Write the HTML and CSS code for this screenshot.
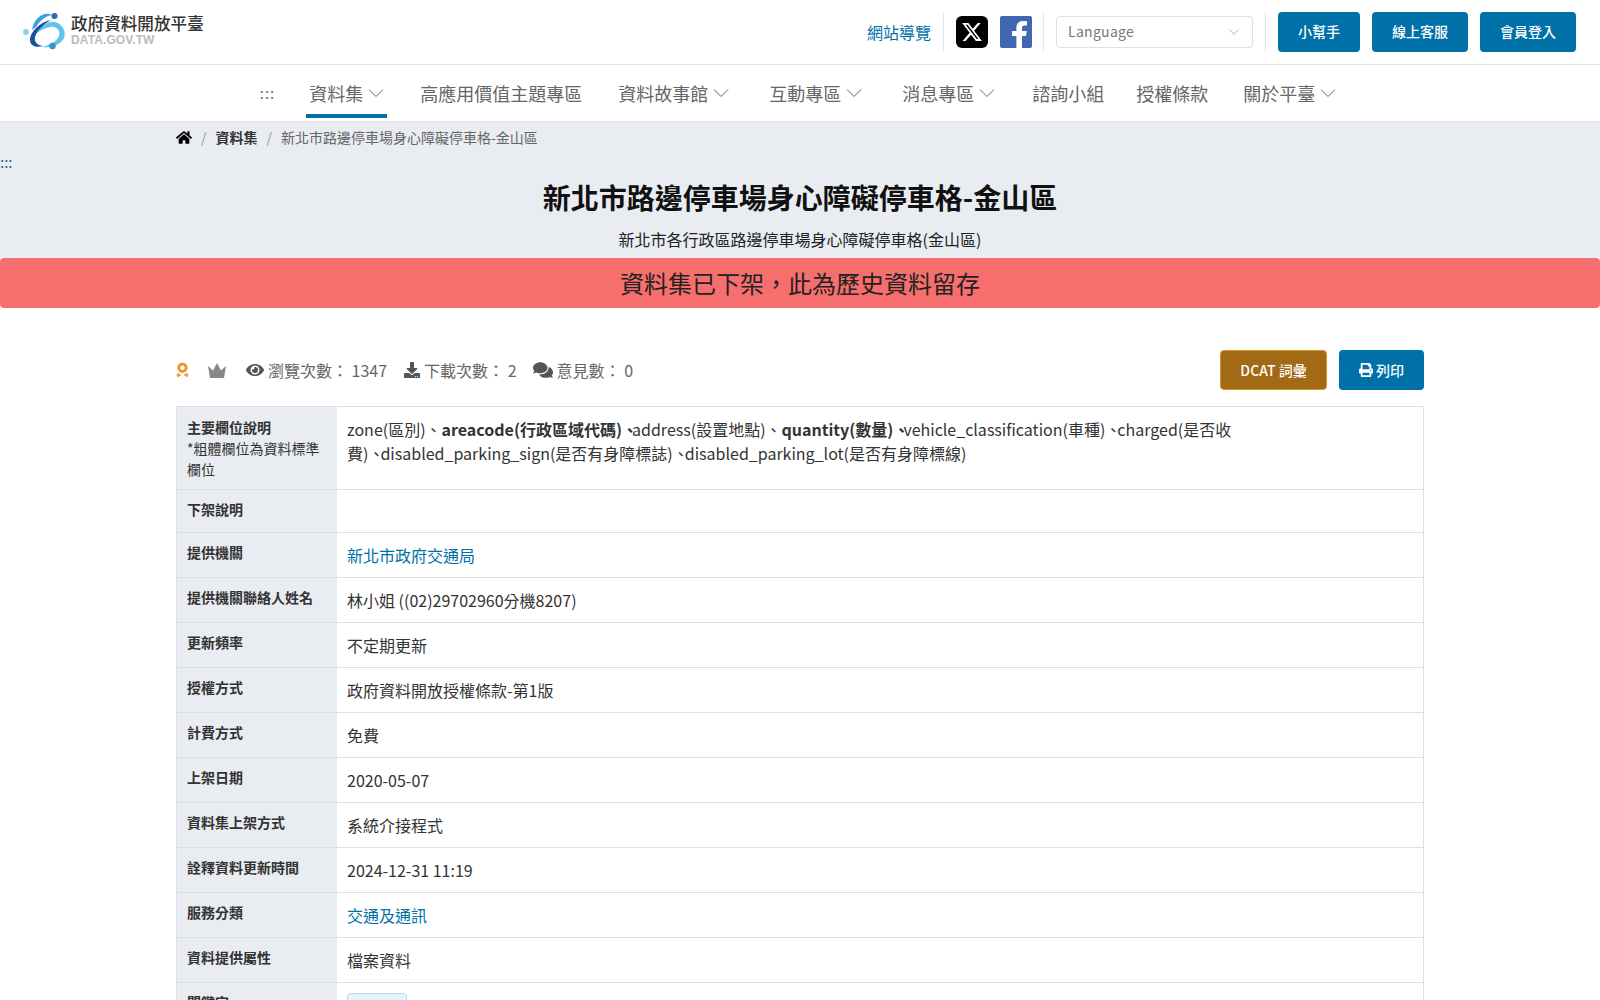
FILE: index.html
```html
<!DOCTYPE html>
<html lang="zh-Hant">
<head>
    <meta charset="utf-8">
    <title>新北市路邊停車場身心障礙停車格-金山區</title>
    <link rel="stylesheet" href="styles.css">
</head>
<body>
    <header class="top-bar">
        <a class="logo" href="#">
            <svg class="logo-mark" viewBox="0 0 50 44">
                <path d="M17 23C20 15 30 9 38 13 45 17 47 26 42 31 36 37 29 38 22 37 30 35 37 31 39 26 41 20 36 16 30 17 25 18 21 20 17 23z" fill="#62c4ea"/>
                <path d="M12 20C14 8 24 1 32 5 25 6 20 11 16 17z" fill="#3a9fde"/>
                <path d="M31 10C20 12 10 22 10 30 10 36 16 38 23 36 17 35 14 32 15 27 17 20 24 14 31 10z" fill="#1b4fa0"/>
                <circle cx="34.500" cy="6" r="3" fill="#2f68b5"/>
                <circle cx="6" cy="22" r="3" fill="#8ad4ee"/>
                <circle cx="32.500" cy="36" r="3.200" fill="#3a8fd0"/>
            </svg>
            <span class="logo-text">
                <span class="logo-name">政府資料開放平臺</span>
                <span class="logo-en">DATA.GOV.TW</span>
            </span>
        </a>
        <div class="top-tools">
            <a class="sitemap" href="#">網站導覽</a>
            <span class="divider"></span>
            <a class="social social-x" href="#">
                <svg viewBox="0 0 24 24"><path fill="#fff" d="M18.244 2.25h3.308l-7.227 8.26 8.502 11.24H16.17l-5.214-6.817L4.99 21.75H1.68l7.73-8.835L1.254 2.25H8.08l4.713 6.231zm-1.161 17.52h1.833L7.084 4.126H5.117z"/></svg>
            </a>
            <a class="social social-fb" href="#">
                <svg viewBox="0 0 32 32"><path fill="#fff" d="M22 32V20h4l.8-5H22v-3c0-1.500.7-2.600 2.800-2.600H27V5.200C26 5.100 24.500 5 23 5c-4 0-6.600 2.400-6.600 6.700V15H12v5h4.400v12z"/></svg>
            </a>
            <span class="divider"></span>
            <div class="lang-select">
                <span>Language</span>
                <svg class="chevron" viewBox="0 0 16 16"><path d="M2 5l6 6 6-6" fill="none" stroke="#aab" stroke-width="1.200"/></svg>
            </div>
            <span class="divider"></span>
            <a class="btn" href="#">小幫手</a>
            <a class="btn" href="#">線上客服</a>
            <a class="btn" href="#">會員登入</a>
        </div>
    </header>

    <nav class="main-nav">
        <span class="nav-mark">:::</span>
        <a class="nav-item active" href="#">資料集<svg class="chevron" viewBox="0 0 16 16"><path d="M1 4.500l7 7 7-7" fill="none" stroke="#666" stroke-width="1"/></svg></a>
        <a class="nav-item" href="#">高應用價值主題專區</a>
        <a class="nav-item nav-wide" href="#">資料故事館<svg class="chevron" viewBox="0 0 16 16"><path d="M1 4.500l7 7 7-7" fill="none" stroke="#666" stroke-width="1"/></svg></a>
        <a class="nav-item nav-wide" href="#">互動專區<svg class="chevron" viewBox="0 0 16 16"><path d="M1 4.500l7 7 7-7" fill="none" stroke="#666" stroke-width="1"/></svg></a>
        <a class="nav-item nav-news" href="#">消息專區<svg class="chevron" viewBox="0 0 16 16"><path d="M1 4.500l7 7 7-7" fill="none" stroke="#666" stroke-width="1"/></svg></a>
        <a class="nav-item nav-close" href="#">諮詢小組</a>
        <a class="nav-item nav-terms" href="#">授權條款</a>
        <a class="nav-item" href="#">關於平臺<svg class="chevron" viewBox="0 0 16 16"><path d="M1 4.500l7 7 7-7" fill="none" stroke="#666" stroke-width="1"/></svg></a>
    </nav>

    <section class="page-head">
        <div class="breadcrumb">
            <svg class="home-icon" viewBox="0 0 576 512"><path d="M280.37 148.26L96 300.11V464a16 16 0 0 0 16 16l112.06-.29a16 16 0 0 0 15.92-16V368a16 16 0 0 1 16-16h64a16 16 0 0 1 16 16v95.64a16 16 0 0 0 16 16.05L464 480a16 16 0 0 0 16-16V300L295.67 148.26a12.19 12.19 0 0 0-15.3 0zM571.6 251.47L488 182.56V44.05a12 12 0 0 0-12-12h-56a12 12 0 0 0-12 12v72.61L318.47 43a48 48 0 0 0-61 0L4.34 251.47a12 12 0 0 0-1.6 16.9l25.5 31A12 12 0 0 0 45.15 301l235.22-193.74a12.19 12.19 0 0 1 15.3 0L530.9 301a12 12 0 0 0 16.9-1.6l25.5-31a12 12 0 0 0-1.7-16.93z"/></svg>
            <span class="crumb-sep">/</span>
            <a class="crumb-link" href="#">資料集</a>
            <span class="crumb-sep">/</span>
            <span class="crumb-current">新北市路邊停車場身心障礙停車格-金山區</span>
        </div>
        <div class="anchor-mark">:::</div>
        <h1>新北市路邊停車場身心障礙停車格-金山區</h1>
        <p class="subtitle">新北市各行政區路邊停車場身心障礙停車格(金山區)</p>
    </section>
    <div class="alert">資料集已下架，此為歷史資料留存</div>

    <main class="content">
        <div class="stats-row">
            <div class="stats">
                <svg class="icon-medal" viewBox="0 0 14 16">
                    <circle cx="7" cy="5.500" r="4" fill="none" stroke="#e89a2c" stroke-width="3.200"/>
                    <path d="M1 13.500h4.500M8.500 13.500H13M3 11.500l-1.500 2 1.500 2M11 11.500l1.500 2-1.500 2" fill="none" stroke="#e89a2c" stroke-width="1.600"/>
                </svg>
                <svg class="icon-crown" viewBox="0 0 18 15"><path d="M0 3l5 4.500L9 0l4 7.500L18 3l-2 12H2z"/></svg>
                <span class="stat">
                    <svg class="icon-eye" viewBox="0 0 576 512"><path d="M572.520 241.400C518.290 135.590 410.930 64 288 64S57.680 135.640 3.480 241.410a32.350 32.350 0 0 0 0 29.190C57.710 376.410 165.070 448 288 448s230.320-71.640 284.520-177.410a32.350 32.350 0 0 0 0-29.190zM288 400a144 144 0 1 1 144-144 143.930 143.930 0 0 1-144 144zm0-240a95.310 95.310 0 0 0-25.310 3.790 47.850 47.850 0 0 1-66.900 66.900A95.780 95.780 0 1 0 288 160z"/></svg>
                    <span>瀏覽次數： 1347</span>
                </span>
                <span class="stat">
                    <svg class="icon-down" viewBox="0 0 512 512"><path d="M216 0h80c13.300 0 24 10.700 24 24v168h87.700c17.800 0 26.700 21.500 14.100 34.100L269.700 378.300c-7.500 7.500-19.800 7.500-27.300 0L90.100 226.100c-12.600-12.600-3.700-34.100 14.100-34.100H192V24c0-13.300 10.700-24 24-24zm296 376v112c0 13.300-10.700 24-24 24H24c-13.300 0-24-10.700-24-24V376c0-13.300 10.700-24 24-24h146.700l49 49c20.100 20.100 52.500 20.100 72.600 0l49-49H488c13.300 0 24 10.700 24 24zm-124 88c0-11-9-20-20-20s-20 9-20 20 9 20 20 20 20-9 20-20zm64 0c0-11-9-20-20-20s-20 9-20 20 9 20 20 20 20-9 20-20z"/></svg>
                    <span>下載次數： 2</span>
                </span>
                <span class="stat">
                    <svg class="icon-chat" viewBox="0 0 576 512"><path d="M416 192c0-88.400-93.100-160-208-160S0 103.600 0 192c0 34.300 14.100 65.900 38 92-13.400 30.200-35.500 54.200-35.800 54.500-2.200 2.300-2.800 5.700-1.500 8.700S4.800 352 8 352c36.600 0 66.900-12.300 88.700-25 32.200 15.700 70.300 25 111.300 25 114.900 0 208-71.600 208-160zm122 220c23.900-26 38-57.700 38-92 0-66.900-53.500-124.200-129.300-148.100.9 6.600 1.300 13.300 1.300 20.100 0 105.900-107.700 192-240 192-10.800 0-21.300-.8-31.700-1.900C207.800 439.600 281.800 480 368 480c41 0 79.100-9.200 111.300-25 21.800 12.700 52.100 25 88.700 25 3.200 0 6.100-1.900 7.300-4.800 1.300-2.900.7-6.300-1.500-8.700-.3-.3-22.400-24.200-35.800-54.500z"/></svg>
                    <span>意見數： 0</span>
                </span>
            </div>
            <div class="actions">
                <a class="btn btn-dcat" href="#">DCAT 詞彙</a>
                <a class="btn btn-print" href="#">
                    <svg viewBox="0 0 512 512"><path d="M448 192V77.250c0-8.490-3.370-16.620-9.370-22.630L393.370 9.370c-6-6-14.140-9.370-22.630-9.370H96C78.330 0 64 14.330 64 32v160c-35.350 0-64 28.650-64 64v112c0 8.840 7.160 16 16 16h48v96c0 17.670 14.330 32 32 32h320c17.670 0 32-14.330 32-32v-96h48c8.840 0 16-7.160 16-16V256c0-35.350-28.650-64-64-64zm-64 256H128v-96h256v96zm0-224H128V64h192v48c0 8.840 7.160 16 16 16h48v96zm48 72c-13.250 0-24-10.750-24-24 0-13.260 10.750-24 24-24s24 10.740 24 24c0 13.250-10.750 24-24 24z"/></svg>
                    列印
                </a>
            </div>
        </div>

        <table class="info-table">
            <tr>
                <th>主要欄位說明<small>*粗體欄位為資料標準欄位</small></th>
                <td class="fields">zone(區別)、<b>areacode(行政區域代碼)<span class="sep-bold">、</span></b>address(設置地點)、<b>quantity(數量)<span class="sep-bold">、</span></b>vehicle_classification(車種)<span class="sep">、</span>charged(是否收費)<span class="sep">、</span>disabled_parking_sign(是否有身障標誌)<span class="sep">、</span>disabled_parking_lot(是否有身障標線)</td>
            </tr>
            <tr><th>下架說明</th><td></td></tr>
            <tr><th>提供機關</th><td><a href="#">新北市政府交通局</a></td></tr>
            <tr><th>提供機關聯絡人姓名</th><td>林小姐 ((02)29702960分機8207)</td></tr>
            <tr><th>更新頻率</th><td>不定期更新</td></tr>
            <tr><th>授權方式</th><td>政府資料開放授權條款-第1版</td></tr>
            <tr><th>計費方式</th><td>免費</td></tr>
            <tr><th>上架日期</th><td>2020-05-07</td></tr>
            <tr><th>資料集上架方式</th><td>系統介接程式</td></tr>
            <tr><th>詮釋資料更新時間</th><td>2024-12-31 11:19</td></tr>
            <tr><th>服務分類</th><td><a href="#">交通及通訊</a></td></tr>
            <tr><th>資料提供屬性</th><td>檔案資料</td></tr>
            <tr><th>關鍵字</th><td><span class="tag">停車格</span></td></tr>
        </table>
    </main>
</body>
</html>
```
FILE: styles.css
```css
* {
    box-sizing: border-box;
}
html, body {
    height: 1000px;
    overflow: hidden;
}
body {
    margin: 0;
    font-family: "Noto Sans CJK TC", "Noto Sans", sans-serif;
    font-size: 16px;
    line-height: 1.5;
    color: #333;
    background: #fff;
}
a {
    color: #0070a8;
    text-decoration: none;
}

/* top bar */
.top-bar {
    display: flex;
    justify-content: space-between;
    align-items: center;
    height: 65px;
    padding: 0 24px 1px 20px;
    border-bottom: 1px solid #dcdfe8;
}
.logo {
    display: flex;
    align-items: center;
    gap: 1px;
}
.logo-mark {
    width: 50px;
    height: 44px;
}
.logo-text {
    display: flex;
    flex-direction: column;
    margin-top: -3px;
}
.logo-name {
    font-size: 16.600px;
    font-weight: 500;
    line-height: 20px;
    color: #333;
}
.logo-en {
    font-family: "Liberation Sans", Arial, sans-serif;
    font-size: 12px;
    font-weight: bold;
    line-height: 14px;
    letter-spacing: .1px;
    color: #bcbcbc;
}
.top-tools {
    display: flex;
    align-items: center;
}
.sitemap {
    font-size: 16px;
    margin-right: 12px;
}
.divider {
    width: 1px;
    height: 40px;
    background: #e3e5ec;
}
.social {
    display: block;
    width: 32px;
    height: 32px;
    overflow: hidden;
}
.social svg {
    display: block;
}
.social-x {
    margin-left: 12px;
    padding: 5px;
    border-radius: 6px;
    background: #000;
}
.social-fb {
    margin: 0 11px 0 12px;
    border-radius: 2px;
    background: #4267b2;
}
.lang-select {
    display: flex;
    justify-content: space-between;
    align-items: center;
    width: 197px;
    height: 32px;
    margin: 0 12px;
    padding: 0 12px 0 11px;
    border: 1px solid #dcdfe8;
    border-radius: 4px;
    font-size: 14px;
    letter-spacing: .3px;
    color: #777;
}
.lang-select .chevron {
    width: 12px;
    height: 12px;
}
.btn {
    display: flex;
    align-items: center;
    justify-content: center;
    height: 40px;
    padding: 0 20px;
    margin-left: 12px;
    border-radius: 4px;
    background: #0070a8;
    color: #fff;
    font-size: 14px;
    font-weight: 500;
}

/* main nav */
.main-nav {
    display: flex;
    justify-content: center;
    align-items: stretch;
    gap: 30px;
    height: 57px;
    padding: 1px 1px 0 0;
    border-bottom: 1px solid #dcdfe8;
}
.nav-mark {
    align-self: center;
    margin-right: 1px;
    font-size: 15px;
    color: #666;
    letter-spacing: 1px;
}
.nav-item {
    display: flex;
    align-items: center;
    height: 52px;
    padding: 6px 3px 0;
    font-size: 18px;
    color: #666;
    border-bottom: 4px solid transparent;
}
.nav-item.active {
    border-bottom-color: #0070a8;
}
.nav-wide {
    margin-right: 4px;
}
.nav-news {
    margin-right: 1px;
}
.nav-close {
    margin-right: -4px;
}
.nav-terms {
    margin-right: -1px;
}
.nav-item .chevron {
    width: 16px;
    height: 16px;
    margin-left: 5px;
}

/* page head */
.page-head {
    height: 136px;
    background: #e9ecf1;
    text-align: center;
}
.breadcrumb {
    display: flex;
    align-items: center;
    height: 30px;
    padding-left: 176px;
    font-size: 14px;
}
.home-icon {
    width: 16px;
    height: 15px;
    fill: #000;
}
.crumb-sep {
    margin: 0 9px;
    color: #999;
}
.crumb-link {
    color: #333;
    font-weight: 700;
}
.crumb-current {
    color: #666;
}
.anchor-mark {
    height: 18px;
    padding-top: 1px;
    text-align: left;
    font-size: 15px;
    line-height: 18px;
    color: #0070a8;
}
h1 {
    margin: 6px 0 0;
    font-size: 28px;
    font-weight: 700;
    line-height: 42px;
    color: #111;
}
.subtitle {
    margin: 9px 0 0;
    font-size: 16px;
    line-height: 24px;
    color: #222;
}
.alert {
    height: 50px;
    border-radius: 4px;
    background: #f76e6e;
    text-align: center;
    font-size: 24px;
    line-height: 50px;
    color: #222;
}

/* stats */
.content {
    padding: 42px 176px 0;
}
.stats-row {
    display: flex;
    justify-content: space-between;
    align-items: center;
    height: 40px;
    margin-bottom: 16px;
}
.stats {
    display: flex;
    align-items: center;
    color: #666;
}
.stats svg {
    fill: #555;
}
.icon-medal {
    width: 13px;
    height: 16px;
}
.stats .icon-crown {
    width: 18px;
    height: 15px;
    margin-left: 19px;
    fill: #888;
}
.stat {
    display: flex;
    align-items: center;
    gap: 4px;
}
.icon-eye {
    width: 18px;
    height: 16px;
    margin-left: 20px;
}
.icon-down {
    width: 16px;
    height: 16px;
    margin-left: 17px;
}
.icon-chat {
    width: 20px;
    height: 18px;
    margin-left: 16px;
}
.actions {
    display: flex;
}
.btn-dcat {
    width: 107px;
    padding: 0;
    margin-left: 0;
    background: #a26a14;
    border: 1px solid #d8922c;
}
.btn-print {
    width: 85px;
    padding: 0;
    gap: 3px;
}
.btn-print svg {
    width: 14px;
    height: 14px;
    fill: #fff;
}

/* info table */
.info-table {
    width: 100%;
    border-collapse: collapse;
    table-layout: fixed;
    border: 1px solid #dcdfe8;
}
.info-table tr {
    border-bottom: 1px solid #dcdfe8;
}
.info-table th {
    width: 160px;
    padding: 9px 10px 12px;
    background: #e9ecf1;
    text-align: left;
    vertical-align: top;
    font-size: 14px;
    font-weight: 700;
    line-height: 21px;
}
.info-table tr:first-child th {
    padding: 10px 10px 9px;
}
.info-table th small {
    display: block;
    font-size: 14px;
    font-weight: 400;
}
.info-table td {
    padding: 10px 10px 10px 10.500px;
    vertical-align: top;
    font-size: 16px;
    line-height: 24px;
}
.info-table td.fields {
    padding-top: 10px;
    padding-right: 188px;
}
.sep {
    margin-right: -4px;
}
.sep-bold {
    margin-right: -6px;
}
.tag {
    display: inline-block;
    width: 60px;
    height: 30px;
    padding-top: 6px;
    text-align: center;
    border: 1px solid #b9d9ef;
    border-radius: 4px;
    background: #e6f2fb;
    font-size: 14px;
}
```
